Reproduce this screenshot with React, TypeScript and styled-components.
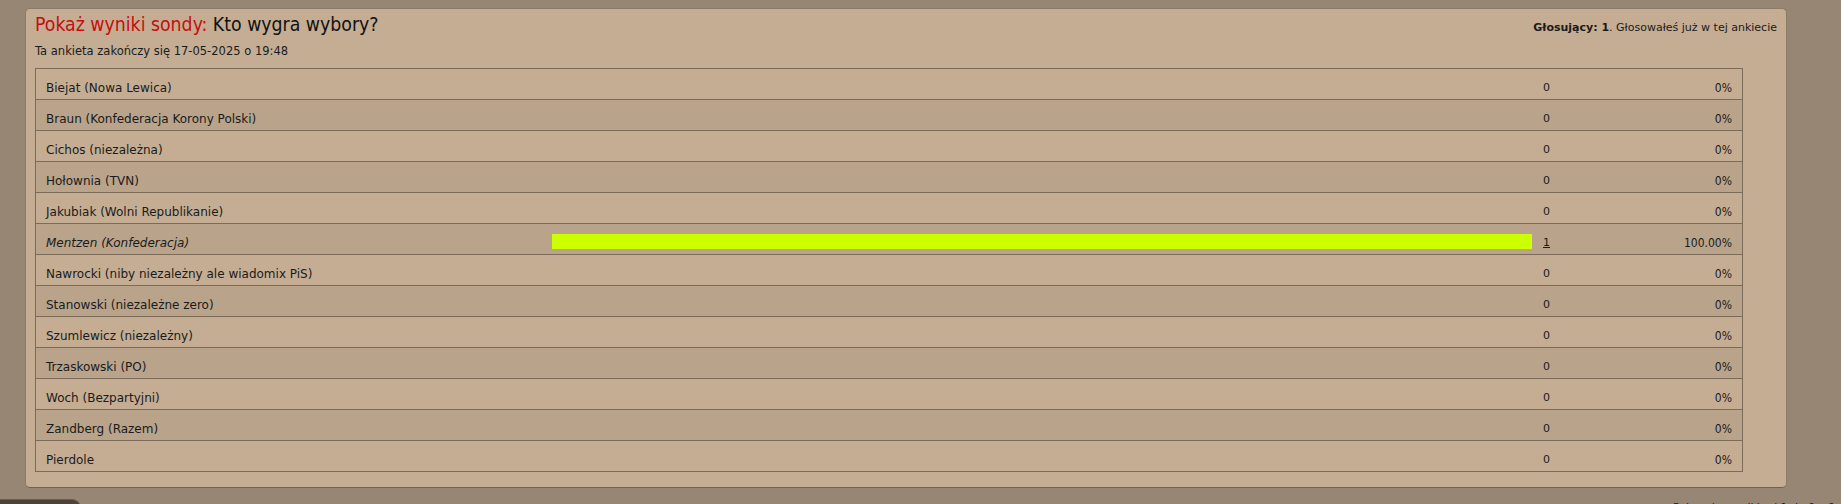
import { FunctionComponent } from "react";
import styled, { createGlobalStyle } from "styled-components";

interface PollOption {
  name: string;
  votes: number;
  voted?: boolean;
}

const options: PollOption[] = [
  { name: "Biejat (Nowa Lewica)", votes: 0 },
  { name: "Braun (Konfederacja Korony Polski)", votes: 0 },
  { name: "Cichos (niezależna)", votes: 0 },
  { name: "Hołownia (TVN)", votes: 0 },
  { name: "Jakubiak (Wolni Republikanie)", votes: 0 },
  { name: "Mentzen (Konfederacja)", votes: 1, voted: true },
  { name: "Nawrocki (niby niezależny ale wiadomix PiS)", votes: 0 },
  { name: "Stanowski (niezależne zero)", votes: 0 },
  { name: "Szumlewicz (niezależny)", votes: 0 },
  { name: "Trzaskowski (PO)", votes: 0 },
  { name: "Woch (Bezpartyjni)", votes: 0 },
  { name: "Zandberg (Razem)", votes: 0 },
  { name: "Pierdole", votes: 0 },
];

const totalVotes = options.reduce((sum, o) => sum + o.votes, 0);

const formatPercent = (votes: number) => {
  if (!votes || !totalVotes) return "0%";
  return `${((votes / totalVotes) * 100).toFixed(2)}%`;
};

const narrowFont = `"DejaVu Sans Condensed", "DejaVu Sans", Verdana, sans-serif`;

const GlobalStyle = createGlobalStyle`
  html, body {
    margin: 0;
    padding: 0;
    background: #978673;
    overflow: hidden;
  }

  body {
    font-family: "DejaVu Sans", Verdana, sans-serif;
    color: #1b1b1b;
  }
`;

const App: FunctionComponent = () => {
  return (
    <>
      <GlobalStyle />
      <Page>
        <PollPanel>
          <PollHeader>
            <PollTitle>
              <span className="label">Pokaż wyniki sondy:</span> Kto wygra
              wybory?
            </PollTitle>
            <VoterInfo>
              <strong>Głosujący: 1</strong>. Głosowałeś już w tej ankiecie
            </VoterInfo>
          </PollHeader>
          <PollEnds>Ta ankieta zakończy się 17-05-2025 o 19:48</PollEnds>
          <ResultsTable>
            {options.map((option, i) => (
              <ResultRow key={option.name} $alt={i % 2 === 1}>
                <OptionName $voted={option.voted}>{option.name}</OptionName>
                <BarCell>
                  {option.votes > 0 && (
                    <Bar
                      style={{
                        width: `${(option.votes / totalVotes) * 100}%`,
                      }}
                    />
                  )}
                </BarCell>
                <VoteCount>
                  {option.votes > 0 ? (
                    <a href="#">{option.votes}</a>
                  ) : (
                    option.votes
                  )}
                </VoteCount>
                <Percent>{formatPercent(option.votes)}</Percent>
              </ResultRow>
            ))}
          </ResultsTable>
        </PollPanel>
        <PollFooter>
          <FooterTab />
          <ResultsInfo>Pokazuje wyniki od 1 do 9 z 9</ResultsInfo>
        </PollFooter>
      </Page>
    </>
  );
};

const Page = styled.div`
  width: 1841px;
  height: 504px;
  padding-top: 8px;
  box-sizing: border-box;
`;

const PollPanel = styled.div`
  margin-left: 25px;
  width: 1762px;
  box-sizing: border-box;
  padding: 4px 9px 15px;
  background: #c4ad93;
  border: 1px solid #8c7b67;
  border-bottom-color: #6f604f;
  border-radius: 5px;
`;

const PollHeader = styled.div`
  display: flex;
  justify-content: space-between;
  align-items: baseline;
`;

const PollTitle = styled.h1`
  margin: 0;
  font-family: ${narrowFont};
  font-stretch: condensed;
  font-size: 19.3px;
  font-weight: normal;
  line-height: 24px;
  color: #111;

  .label {
    color: #c40f0f;
  }
`;

const VoterInfo = styled.div`
  font-size: 11px;
  line-height: 14px;

  strong {
    font-weight: bold;
  }
`;

const PollEnds = styled.div`
  margin-top: 7px;
  font-size: 11.5px;
  line-height: 14px;
`;

const ResultsTable = styled.div`
  margin-top: 10px;
  width: 1708px;
  box-sizing: border-box;
  border: 1px solid #7c6b59;
`;

const ResultRow = styled.div<{ $alt: boolean }>`
  display: grid;
  grid-template-columns: 516px 980px 71px 1fr;
  height: 30px;
  background: ${({ $alt }) => ($alt ? "#b9a38a" : "#c4ad93")};
  line-height: 14px;

  & + & {
    border-top: 1px solid #7c6b59;
  }
`;

const OptionName = styled.div<{ $voted?: boolean }>`
  padding: 12px 0 0 10px;
  font-size: 12px;
  font-style: ${({ $voted }) => ($voted ? "italic" : "normal")};
  white-space: nowrap;
`;

const BarCell = styled.div`
  padding-top: 10px;
`;

const Bar = styled.div`
  height: 15px;
  background: #ccff00;
`;

const VoteCount = styled.div`
  padding: 12px 0 0 11px;
  font-size: 11px;

  a {
    color: #1b1b1b;
    text-decoration: underline;
  }
`;

const Percent = styled.div`
  padding: 12px 10px 0 0;
  font-family: ${narrowFont};
  font-stretch: condensed;
  font-size: 12px;
  text-align: right;
`;

const PollFooter = styled.div`
  display: flex;
  justify-content: space-between;
  align-items: flex-start;
  margin-top: 11px;
`;

const FooterTab = styled.div`
  width: 80px;
  height: 12px;
  background: #4b433a;
  border-top: 1px solid #6a5e51;
  border-right: 1px solid #6a5e51;
  border-top-right-radius: 9px;
`;

const ResultsInfo = styled.div`
  margin-top: 2px;
  font-size: 11px;
  line-height: 14px;
  white-space: nowrap;
  width: 168px;
`;

export default App;
